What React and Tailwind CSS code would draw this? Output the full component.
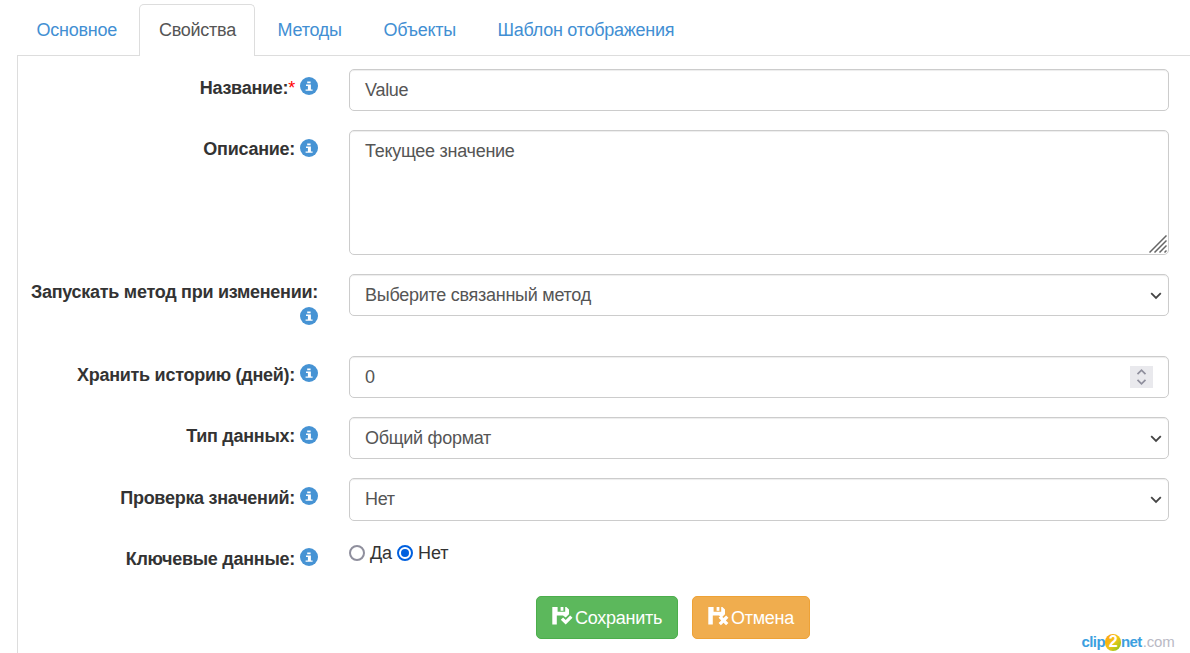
const tabs = [
  { label: "Основное", box: "ml-[17px] w-[120px] pl-[19.6px]" },
  { label: "Свойства", active: true },
  { label: "Методы", box: "w-[109px] pl-[22.6px]" },
  { label: "Объекты", box: "w-[114px] pl-[19.6px]" },
  { label: "Шаблон отображения", box: "w-[216px] pl-[19.6px]" },
];

function InfoIcon({ className = "" }) {
  return (
    <svg viewBox="0 0 18 18" className={`h-[18px] w-[18px] shrink-0 ${className}`}>
      <circle cx="9" cy="9" r="9" fill="#4693d4" />
      <path d="M7.2 4.6h3.4v1.6H7.2zM6 7.6h4.9v4.8h1.7v1.4H5.6v-1.4h2.3V9H6z" fill="#fff" />
    </svg>
  );
}

function Row({ label, required, height, wrap, labelTop = "mt-[6px]", iconTop = "mt-[9px]", children }) {
  return (
    <div className={`flex ${height}`}>
      <div className={`flex w-[300px] shrink-0 ${wrap ? "flex-col items-end" : "justify-end gap-[5px]"}`}>
        <div className={`whitespace-nowrap font-bold leading-[26px] text-[#333] ${labelTop}`}>
          {label}
          {required && <span className="font-normal text-[#f00]">*</span>}
        </div>
        <InfoIcon className={iconTop} />
      </div>
      <div className="ml-[31px] w-[820px] shrink-0">{children}</div>
    </div>
  );
}

const control =
  "relative flex w-full rounded-[5px] border border-[#ccc] bg-white pl-[15px] text-[#555] shadow-[inset_0_1px_1px_rgba(0,0,0,0.075)]";

function Select({ value, height = "h-[42px]" }) {
  return (
    <div className={`${control} ${height}`}>
      <div className="flex h-[40px] w-full items-center justify-between pr-[6px]">
        <span>{value}</span>
        <svg viewBox="0 0 12 8" className="mt-[2px] h-[8px] w-[12px]" fill="none" stroke="#444" strokeWidth="1.8">
          <path d="M1.2 1.2 6 6l4.8-4.8" />
        </svg>
      </div>
    </div>
  );
}

function DiskIcon({ kind }) {
  return (
    <svg viewBox="0 0 21 19" className="mt-[-2px] h-[19px] w-[21px]" fill="#fff">
      <path d="M.3 0H5.6v4.8h7.6V0h1.2L17 2.6v4.6l-3.3 3.2L11 8.4H4.8v9H.3z" />
      <path d="M8.6 0h2.8v3.8H8.6z" />
      {kind === "check" ? (
        <path d="m8.8 12.8 2.3-2.2 2.6 2.5L18.2 8.6l2.3 2.2-6.8 6.8z" />
      ) : (
        <path d="m10.6 10.8 2.3-2.2 2.6 2.5 2.6-2.5 2.3 2.2-2.6 2.6 2.6 2.6-2.3 2.2-2.6-2.5-2.6 2.5-2.3-2.2 2.6-2.6z" />
      )}
    </svg>
  );
}

export default function App() {
  return (
    <div className="relative h-[653px] w-[1190px] overflow-hidden bg-white font-['Liberation_Sans',Arial,sans-serif] text-[18px] leading-[26px] tracking-[-0.27px]">
      <nav className="flex h-[56px] items-end">
        {tabs.map((t) =>
          t.active ? (
            <div key={t.label} className="flex h-[52px] w-[118px] shrink-0 border-b border-[#ddd]">
              <div className="ml-[2px] -mb-px h-[52px] w-[116px] rounded-t-[5px] border border-b-0 border-[#ddd] bg-white pl-[19px] pt-[12px] text-[#555]">
                {t.label}
              </div>
            </div>
          ) : (
            <div key={t.label} className={`h-[52px] shrink-0 whitespace-nowrap border-b border-[#ddd] pt-[13px] text-[#428fd3] ${t.box}`}>
              {t.label}
            </div>
          )
        )}
        <div className="h-[52px] grow border-b border-[#ddd]" />
      </nav>
      <main className="ml-[17px] h-[597px] border-l border-[#ddd] pt-[13px]">
        <Row label="Название:" required height="h-[61px]" iconTop="mt-[8px]">
          <div className={`${control} h-[42px] items-center`}>Value</div>
        </Row>
        <Row label="Описание:" height="h-[144px]">
          <div className={`${control} h-[125px] pt-[7px]`}>
            Текущее значение
            <svg viewBox="0 0 18 18" className="absolute bottom-px right-px h-[18px] w-[18px]" fill="none" stroke="#666" strokeWidth="1.5">
              <path d="M.5 17.5 17.5.5M5.5 17.5l12-12M10.5 17.5l7-7M15.5 17.5l2-2" />
            </svg>
          </div>
        </Row>
        <Row label="Запускать метод при изменении:" height="h-[82px]" wrap labelTop="mt-[5px]" iconTop="mt-[2px]">
          <Select value="Выберите связанный метод" />
        </Row>
        <Row label="Хранить историю (дней):" height="h-[61px]" iconTop="mt-[8px]">
          <div className={`${control} h-[42px] items-center justify-between pr-[15px]`}>
            <span>0</span>
            <svg viewBox="0 0 23 22" className="h-[22px] w-[23px]" fill="none" stroke="#8f8f9d" strokeWidth="1.7">
              <path d="M0 0h23v22H0z" fill="#e9e9ed" stroke="none" />
              <path d="m7.5 8.2 4-4 4 4M7.5 13.8l4 4 4-4" />
            </svg>
          </div>
        </Row>
        <Row label="Тип данных:" height="h-[61px]">
          <Select value="Общий формат" />
        </Row>
        <Row label="Проверка значений:" height="h-[61px]" labelTop="mt-[7px]">
          <Select value="Нет" height="h-[43px]" />
        </Row>
        <Row label="Ключевые данные:" height="h-[57px]" labelTop="mt-[7px]">
          <div className="flex tracking-[-0.1px] text-[#333]">
            <span className="mt-[6px] h-[16px] w-[16px] rounded-full border-2 border-[#8f8f9d]" />
            <span className="ml-[5px] mt-px w-[22px]">Да</span>
            <span className="ml-[5px] mt-[6px] flex h-[16px] w-[16px] items-center justify-center rounded-full border-2 border-[#0060df]">
              <span className="h-[8px] w-[8px] rounded-full bg-[#0060df]" />
            </span>
            <span className="ml-[5px] mt-px">Нет</span>
          </div>
        </Row>
        <div className="ml-[518px] flex gap-[14px] text-white">
          <button className="flex h-[43px] w-[142px] items-center gap-[2px] rounded-[5px] border border-[#4cae4c] bg-[#5cb85c] pl-[15px]">
            <DiskIcon kind="check" />
            Сохранить
          </button>
          <button className="flex h-[43px] w-[118px] items-center gap-[2px] rounded-[5px] border border-[#eea236] bg-[#f0ad4e] pl-[15px]">
            <DiskIcon kind="cross" />
            Отмена
          </button>
        </div>
      </main>
      <div className="absolute left-[1081.5px] top-[632px] flex h-[20px] items-center text-[15px] font-bold leading-[20px] tracking-[-0.6px] text-[#3c9fe0]">
        clip
        <span className="flex h-[17px] w-[16px] items-center justify-center rounded-full bg-linear-to-br from-[#ff9d0a] via-[#f3c416] to-[#6cc61c] text-[16px] text-white">2</span>
        net<span className="ml-[1px] font-normal tracking-[-0.1px] text-[#b9b9c4]">.com</span>
      </div>
    </div>
  );
}
